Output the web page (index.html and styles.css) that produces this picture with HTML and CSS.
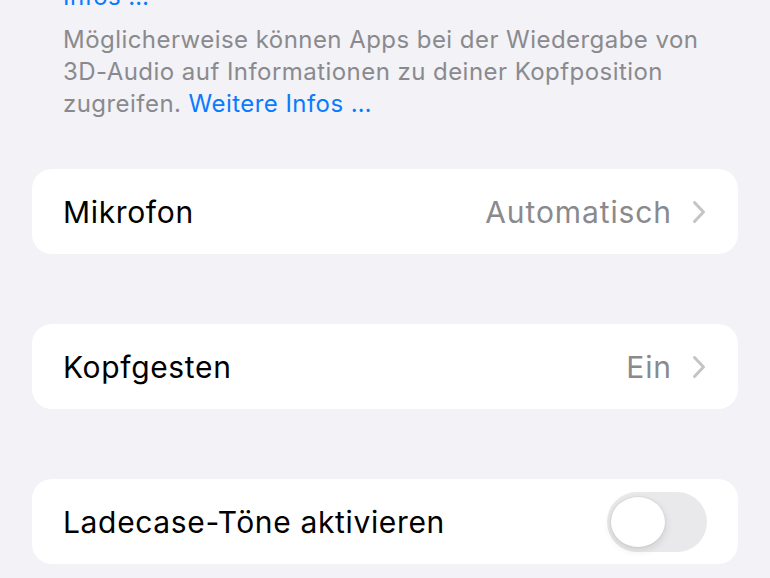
FILE: index.html
```html
<!DOCTYPE html>
<html lang="de">
<head>
<meta charset="utf-8">
<title>AirPods</title>
<link rel="stylesheet" href="styles.css">
</head>
<body>
<main class="settings">
  <p class="footnote footnote-prev"><a class="link" href="#">Infos …</a></p>
  <p class="footnote">Möglicherweise können Apps bei der Wiedergabe von 3D-Audio auf Informationen zu deiner Kopfposition zugreifen. <a class="link" href="#">Weitere Infos …</a></p>

  <section class="group">
    <div class="row">
      <span class="label">Mikrofon</span>
      <span class="detail">Automatisch</span>
      <svg class="chevron" viewBox="0 0 14 24" aria-hidden="true"><path d="M2.5 2.5 L11.5 12 L2.5 21.5"/></svg>
    </div>
  </section>

  <section class="group">
    <div class="row">
      <span class="label">Kopfgesten</span>
      <span class="detail">Ein</span>
      <svg class="chevron" viewBox="0 0 14 24" aria-hidden="true"><path d="M2.5 2.5 L11.5 12 L2.5 21.5"/></svg>
    </div>
  </section>

  <section class="group">
    <div class="row">
      <span class="label">Ladecase-Töne aktivieren</span>
      <span class="switch" role="switch" aria-checked="false"><span class="knob"></span></span>
    </div>
  </section>
</main>
</body>
</html>
```

FILE: styles.css
```css
* { box-sizing: border-box; }

html, body {
  margin: 0;
  background: #f2f2f7;
}

body {
  font-family: "Inter", "Liberation Sans", sans-serif;
  -webkit-font-smoothing: antialiased;
  overflow: hidden;
}

.settings {
  display: flex;
  flex-direction: column;
  padding: 0 32px;
}

.footnote {
  margin: 0;
  padding: 0 31px;
  font-size: 24px;
  line-height: 32px;
  letter-spacing: 0.45px;
  color: #8a8a8e;
}

.footnote-prev {
  margin-top: -19px;
  margin-bottom: 11px;
}

.link {
  color: #0a7aff;
  text-decoration: none;
}

.group {
  background: #ffffff;
  border-radius: 20px;
  margin-top: 49px;
}

.group + .group {
  margin-top: 70px;
}

.row {
  display: flex;
  align-items: center;
  height: 85px;
  padding: 0 32px 0 31px;
}

.label {
  flex: 1;
  font-size: 30px;
  letter-spacing: 0.65px;
  color: #000000;
}

.detail {
  font-size: 30px;
  letter-spacing: 0.9px;
  color: #8a8a8e;
  margin-right: 20px;
}

.chevron {
  width: 14px;
  height: 24px;
  fill: none;
  stroke: #c4c4c7;
  stroke-width: 3;
  stroke-linecap: round;
  stroke-linejoin: round;
}

.switch {
  position: relative;
  width: 100px;
  height: 60px;
  border-radius: 30px;
  background: #e9e9eb;
  margin-right: -1px;
}

.knob {
  position: absolute;
  left: 4px;
  top: 5px;
  width: 54px;
  height: 50px;
  border-radius: 50%;
  background: #ffffff;
  box-shadow: 0 3px 8px rgba(0, 0, 0, 0.12), 0 0 0 1px rgba(0, 0, 0, 0.04);
}
```
